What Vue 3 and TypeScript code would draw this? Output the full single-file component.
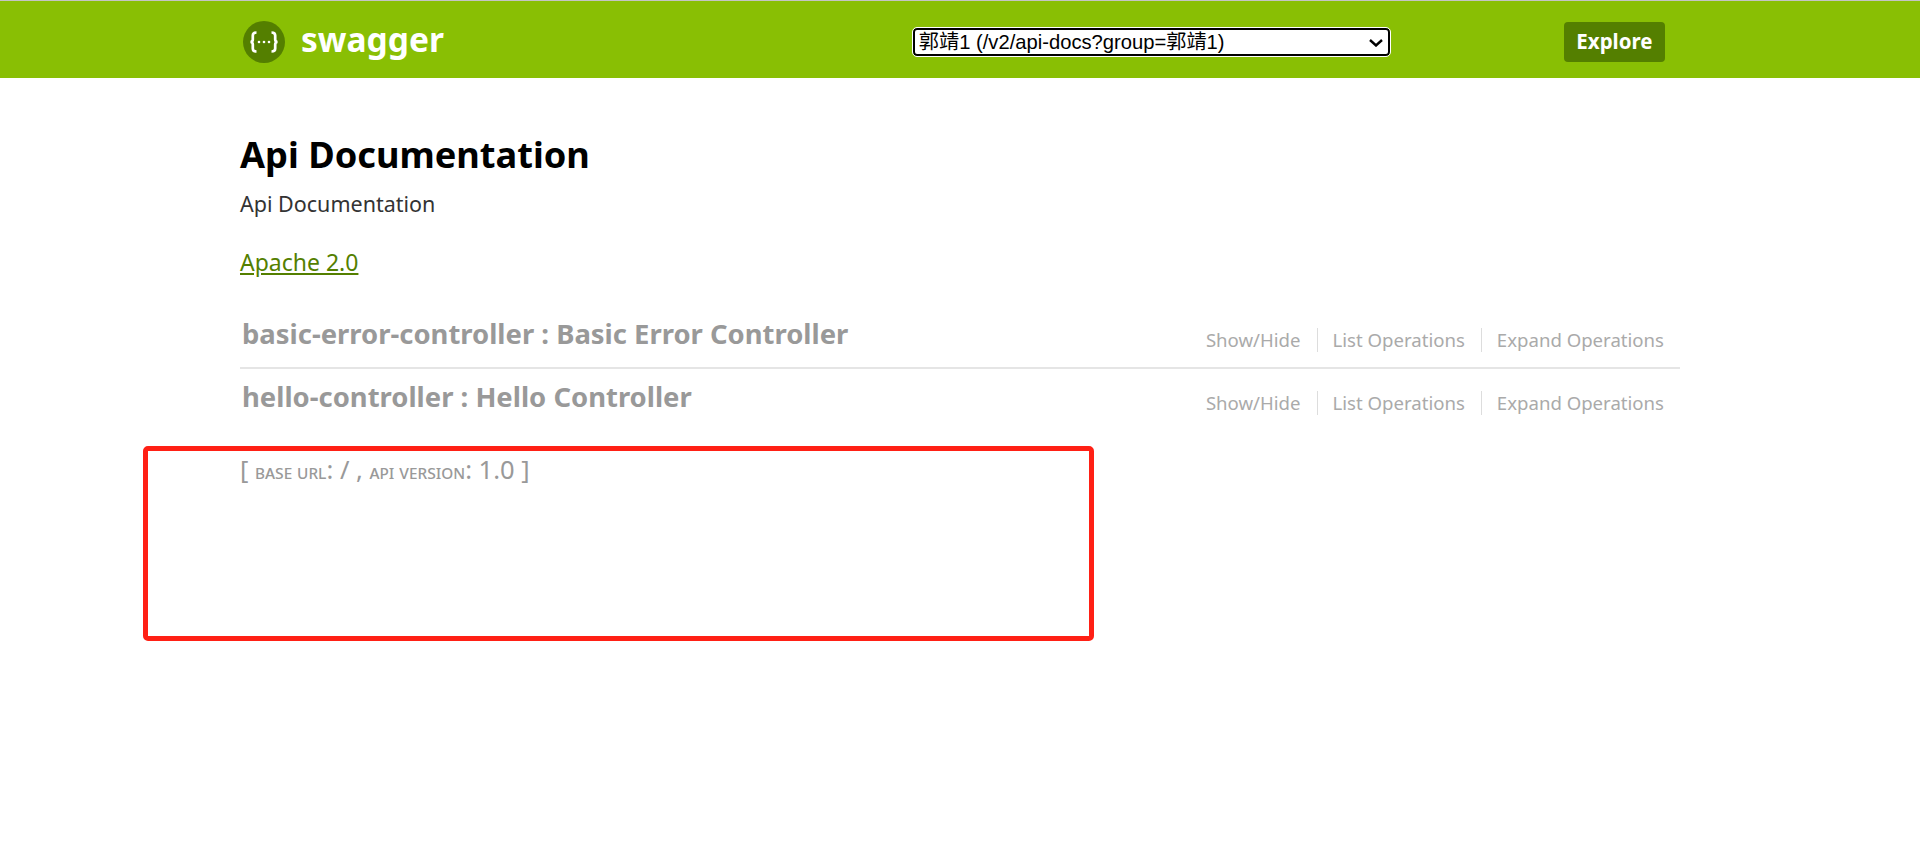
<script setup lang="ts">
import { ref } from "vue";

const group = ref("郭靖1 (/v2/api-docs?group=郭靖1)");

const resources = [
  { name: "basic-error-controller", desc: "Basic Error Controller" },
  { name: "hello-controller", desc: "Hello Controller" },
];
</script>

<template>
  <div class="page">
    <header class="header">
      <a class="logo">
        <svg class="logo-icon" width="42" height="42" viewBox="0 0 42 42">
          <circle cx="21" cy="21" r="21" fill="#547f00" />
          <path
            d="M13.500 11.500c-2.800 0-3.700 1-3.700 3v4c0 1.600-.9 2.400-2.300 2.500 1.400.1 2.300.9 2.300 2.500v4c0 2 .9 3 3.700 3M28.500 11.500c2.800 0 3.700 1 3.700 3v4c0 1.600.9 2.400 2.300 2.500-1.400.1-2.300.9-2.300 2.500v4c0 2-.9 3-3.700 3"
            fill="none"
            stroke="#fff"
            stroke-width="2.700"
          />
          <circle cx="16" cy="21" r="1.300" fill="#fff" />
          <circle cx="21" cy="21" r="1.300" fill="#fff" />
          <circle cx="26" cy="21" r="1.300" fill="#fff" />
        </svg>
        <span class="logo-text">swagger</span>
      </a>
      <div class="controls">
        <div class="select-wrap">
          <select v-model="group" class="group-select">
            <option>郭靖1 (/v2/api-docs?group=郭靖1)</option>
          </select>
          <svg class="chevron" width="14" height="8" viewBox="0 0 14 8">
            <path d="M1 1l6 5.500L13 1" fill="none" stroke="#000" stroke-width="2.400" />
          </svg>
        </div>
        <a class="explore">Explore</a>
      </div>
    </header>

    <main class="content">
      <h1 class="title">Api Documentation</h1>
      <p class="desc">Api Documentation</p>
      <a class="license">Apache 2.0</a>

      <ul class="resources">
        <li v-for="r in resources" :key="r.name" class="resource">
          <h2 class="resource-name">{{ r.name }} : {{ r.desc }}</h2>
          <ul class="ops">
            <li class="op">Show/Hide</li>
            <li class="op">List Operations</li>
            <li class="op">Expand Operations</li>
          </ul>
        </li>
      </ul>

      <div class="footer">
        [ <span class="small">base url</span>: / , <span class="small">api version</span>: 1.0 ]
      </div>
    </main>

    <div class="annotation"></div>
  </div>
</template>

<style>
html,
body {
  margin: 0;
  background: #fff;
}
</style>

<style scoped>
.page {
  position: relative;
  min-height: 866px;
  font-family: "Noto Sans", "Noto Sans CJK SC", sans-serif;
  overflow: hidden;
}

.header {
  box-sizing: border-box;
  background: #89bf04;
  border-top: 1px solid #c4c4c4;
  height: 78px;
  padding: 5px 255px 0 243px;
  display: flex;
  align-items: center;
  justify-content: space-between;
}

.logo {
  display: flex;
  align-items: center;
  gap: 16px;
}

.logo-text {
  color: #fff;
  font-size: 33.500px;
  font-weight: 700;
  line-height: 40px;
  margin-top: -7px;
}

.controls {
  display: flex;
  align-items: center;
}

.select-wrap {
  position: relative;
  margin-right: 174px;
  display: flex;
}

.group-select {
  appearance: none;
  width: 477px;
  height: 28px;
  box-sizing: border-box;
  border: 2px solid #000;
  border-radius: 4px;
  outline: 1px solid #fff;
  background: #fff;
  color: #000;
  padding: 0 0 0 4px;
  font-family: "Liberation Sans", "Noto Sans CJK SC", sans-serif;
  font-size: 20.200px;
}

.chevron {
  position: absolute;
  right: 7px;
  top: 11px;
  pointer-events: none;
}

.explore {
  display: block;
  background: #547f00;
  color: #fff;
  font-size: 20.500px;
  font-weight: 700;
  line-height: 38px;
  padding: 0 12.500px 2px;
  border-radius: 4px;
}

.content {
  width: 1440px;
  margin: 0 auto;
  padding-top: 51px;
}

.title {
  margin: 0;
  color: #000;
  font-size: 36.200px;
  font-weight: 700;
  line-height: 50px;
}

.desc {
  margin: 10px 0 0;
  color: #333;
  font-size: 21.500px;
  line-height: 30px;
}

.license {
  display: inline-block;
  margin-top: 28px;
  color: #547f00;
  font-size: 23px;
  line-height: 30px;
  text-decoration: underline;
}

.resources {
  list-style: none;
  margin: 30px 0 0;
  padding: 0;
}

.resource {
  display: flex;
  align-items: flex-end;
  justify-content: space-between;
  height: 61px;
  box-sizing: border-box;
  padding: 0 16px 0 2px;
}

.resource:first-child {
  height: 62px;
  border-bottom: 2px solid #e5e5e5;
}

.resource-name {
  margin: 0 0 16px;
  color: #999;
  font-size: 27.450px;
  font-weight: 700;
  line-height: 34px;
}

.ops {
  list-style: none;
  display: flex;
  margin: 0 0 15px;
  padding: 0;
}

.op {
  color: #aaa;
  font-size: 18.600px;
  line-height: 24px;
  padding: 0 16px 0 15px;
  border-left: 1px solid #ddd;
}

.op:first-child {
  border-left: 0;
}

.op:last-child {
  padding-right: 0;
}

.footer {
  margin: 24px 0 0;
  color: #999;
  font-size: 25.500px;
  line-height: 30px;
}

.small {
  font-size: 19px;
  font-variant: small-caps;
}

.annotation {
  position: absolute;
  left: 143px;
  top: 446px;
  width: 951px;
  height: 195px;
  box-sizing: border-box;
  border: 5px solid #ff2015;
  border-radius: 5px;
}
</style>
